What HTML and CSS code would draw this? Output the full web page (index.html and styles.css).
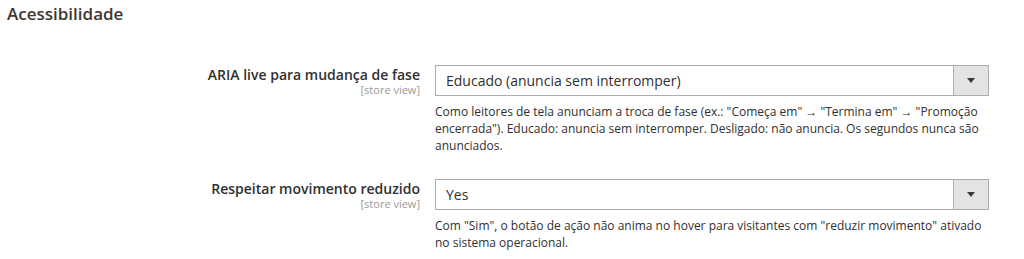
FILE: index.html
```html
<!DOCTYPE html>
<html lang="pt-BR">
<head>
    <meta charset="UTF-8">
    <title>Acessibilidade</title>
    <link rel="stylesheet" href="styles.css">
</head>
<body>
    <div class="section">
        <h2 class="section-title">Acessibilidade</h2>

        <div class="field">
            <div class="label">
                <span class="label-text">ARIA live para mudança de fase</span>
                <span class="scope">[store view]</span>
            </div>
            <div class="control">
                <div class="select">
                    <span class="select-value">Educado (anuncia sem interromper)</span>
                    <span class="select-arrow"></span>
                </div>
                <p class="note">Como leitores de tela anunciam a troca de fase (ex.: "Começa em" &rarr; "Termina em" &rarr; "Promoção encerrada"). Educado: anuncia sem interromper. Desligado: não anuncia. Os segundos nunca são anunciados.</p>
            </div>
        </div>

        <div class="field">
            <div class="label">
                <span class="label-text">Respeitar movimento reduzido</span>
                <span class="scope">[store view]</span>
            </div>
            <div class="control">
                <div class="select">
                    <span class="select-value">Yes</span>
                    <span class="select-arrow"></span>
                </div>
                <p class="note">Com "Sim", o botão de ação não anima no hover para visitantes com "reduzir movimento" ativado no sistema operacional.</p>
            </div>
        </div>
    </div>
</body>
</html>
```

FILE: styles.css
```css
body {
    margin: 0;
    font-family: 'Open Sans', 'Noto Sans', sans-serif;
    color: #303030;
    background: #fff;
}
.section {
    padding: 2px 0 0 7px;
}
.section-title {
    margin: 0;
    font-size: 17px;
    font-weight: 600;
    line-height: 23px;
    color: #41362f;
}
.field {
    display: flex;
    gap: 15px;
    margin-top: 40px;
}
.field + .field {
    margin-top: 25px;
}
.label {
    width: 413px;
    display: flex;
    flex-direction: column;
    align-items: flex-end;
}
.label-text {
    font-size: 14px;
    font-weight: 600;
    line-height: 19px;
    color: #303030;
}
.scope {
    font-size: 11px;
    line-height: 12px;
    color: #999;
}
.control {
    width: 554px;
}
.select {
    display: flex;
    align-items: center;
    height: 31px;
    box-sizing: border-box;
    border: 1px solid #adadad;
    background: #fff;
}
.select-value {
    flex: 1;
    padding-left: 10px;
    font-size: 14px;
    color: #303030;
}
.select-arrow {
    width: 34px;
    height: 100%;
    border-left: 1px solid #adadad;
    background: #e3e3e3;
    position: relative;
}
.select-arrow::after {
    content: "";
    position: absolute;
    left: 13px;
    top: 12px;
    border-left: 4px solid transparent;
    border-right: 4px solid transparent;
    border-top: 5px solid #41362f;
}
.note {
    margin: 7px 0 0;
    font-size: 12px;
    line-height: 17px;
    color: #303030;
}
```
